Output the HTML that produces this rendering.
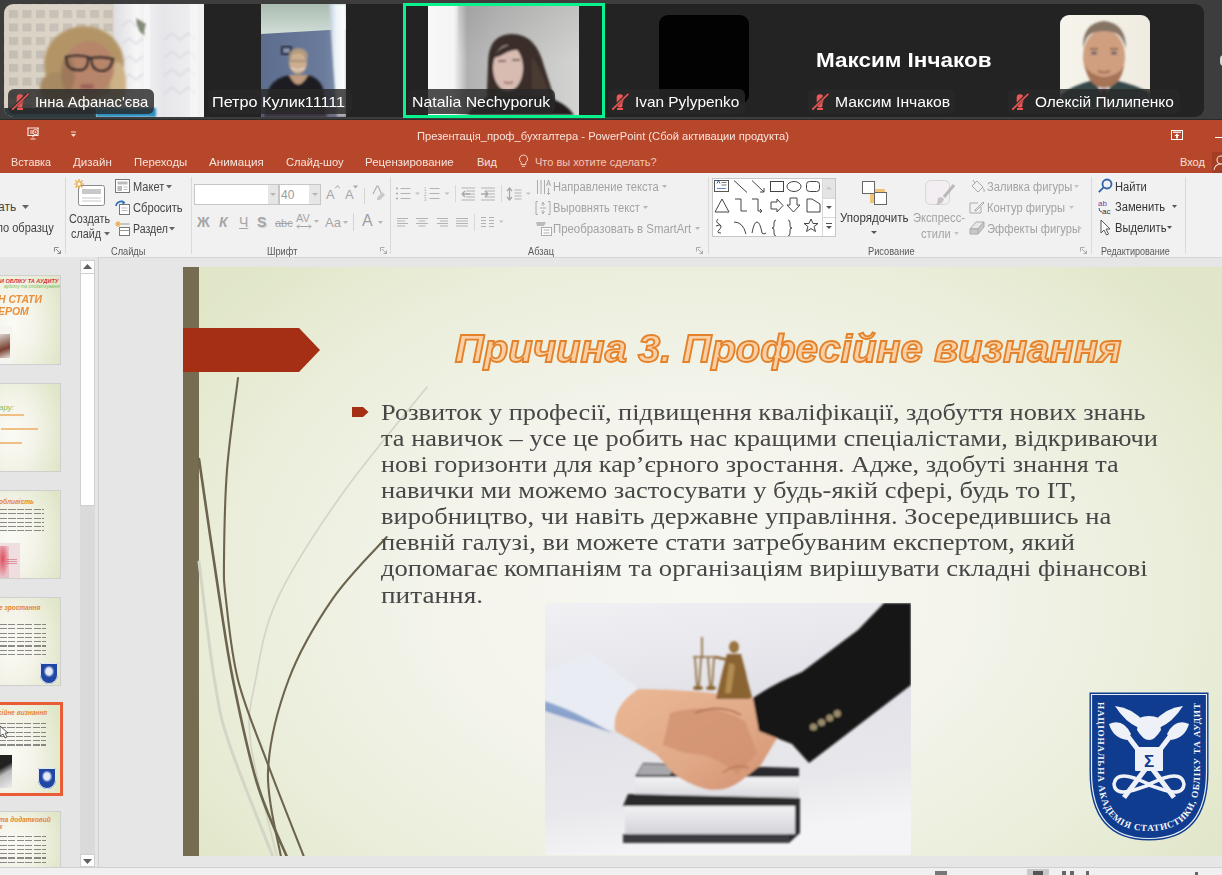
<!DOCTYPE html>
<html><head><meta charset="utf-8">
<style>
*{margin:0;padding:0;box-sizing:border-box}
html,body{width:1222px;height:875px;overflow:hidden;background:#3c3c3c;font-family:"Liberation Sans",sans-serif}
.a{position:absolute}
#zoom{position:absolute;left:0;top:0;width:1222px;height:120px;background:#3d3d3d}
.strip{position:absolute;left:4px;top:4px;width:1200px;height:113px;background:#232323;border-radius:9px;overflow:hidden}
.lbl{position:absolute;height:25px;background:rgba(40,40,40,.82);border-radius:6px;color:#fff;font-size:15px;line-height:25px;white-space:nowrap}
.lbl span{position:absolute;top:0}
.mute{position:absolute;left:4px;top:4px;width:17px;height:17px}
#ppt{position:absolute;left:0;top:120px;width:1222px;height:755px;background:#e6e6e6}
.title{position:absolute;left:0;top:0;width:1222px;height:53px;background:#b7472a}
.tab{position:absolute;top:35px;color:#f6e3dc;font-size:11px;line-height:14px;white-space:nowrap}
.ribbon{position:absolute;left:0;top:53px;width:1222px;height:85px;background:#f2f1f2;border-bottom:1px solid #d6d6d6}
.rt{position:absolute;font-size:12px;color:#444;white-space:nowrap;line-height:14px}
.rg{color:#a5a5a5}
.gl{position:absolute;top:124px;font-size:11px;color:#5a5a5a;white-space:nowrap;line-height:14px}
.thumb{position:absolute;left:-1px;width:62px;border:1px solid #cfcfcf;background:radial-gradient(ellipse 90% 90% at 20% 55%,#fbfbf6 0%,#f3f3e8 45%,#dfe6c6 100%);overflow:hidden}
.body{position:absolute;left:197.5px;top:132px}
.body div{position:absolute;left:0;font-family:"Liberation Serif",serif;font-size:23.5px;line-height:26px;color:#474747;white-space:nowrap;transform-origin:0 0;transform:scaleX(1.118)}
.tl{background:repeating-linear-gradient(#333 0 1px,transparent 1px 4.3px);opacity:.55;-webkit-mask-image:repeating-linear-gradient(90deg,#000 0 7px,transparent 7px 8.5px)}
.logo-s{width:18px;height:21px;background:#1f47a3;border-radius:1px 1px 9px 9px;box-shadow:inset 0 0 0 1px #dfe6f4}
.logo-s::after{content:"";position:absolute;left:3px;top:3px;width:12px;height:12px;background:radial-gradient(ellipse 45% 50% at 50% 45%,rgba(240,244,250,.95) 0 55%,rgba(240,244,250,0) 100%)}
.tt{position:absolute;left:0;font-weight:bold;font-style:italic;white-space:nowrap;line-height:1;transform-origin:0 0}
.sep{position:absolute;top:58px;width:1px;height:77px;background:#dadada}
</style></head><body>
<div id="zoom">
 <div class="a" style="left:0;top:119px;width:1222px;height:1px;background:#2a2a2a"></div>
 <div class="strip">
  <!-- tile1 video -->
  <svg class="a" style="left:0;top:0" width="200" height="113" viewBox="0 0 200 113">
   <defs>
    <filter id="b1" x="-20%" y="-20%" width="140%" height="140%"><feGaussianBlur stdDeviation="1.6"/></filter>
    <filter id="b2"><feGaussianBlur stdDeviation="0.8"/></filter>
    <pattern id="tiles" width="13.5" height="13.5" patternUnits="userSpaceOnUse" x="3" y="4"><rect width="13.5" height="13.5" fill="#d8d0c2"/><rect x="2" y="2" width="9" height="8" fill="#c2bbb0"/></pattern>
    <linearGradient id="cur" x1="0" x2="1"><stop offset="0" stop-color="#dedee2"/><stop offset=".25" stop-color="#f6f6f7"/><stop offset=".55" stop-color="#e6e6ea"/><stop offset="1" stop-color="#f2f2f4"/></linearGradient>
    <radialGradient id="wallLight" cx=".6" cy=".2" r=".8"><stop offset="0" stop-color="#fff" stop-opacity=".12"/><stop offset="1" stop-color="#fff" stop-opacity="0"/></radialGradient>
   </defs>
   <rect width="200" height="113" fill="url(#tiles)"/>
   <rect width="114" height="113" fill="url(#wallLight)"/>
   <rect x="110" y="0" width="90" height="113" fill="url(#cur)"/>
   <g filter="url(#b2)" stroke="#cfcfd4" stroke-width="1.3" fill="none" opacity=".75">
    <path d="M118 22 l7 -6 l7 6 l7 -6 M118 40 l7 -6 l7 6 l7 -6 M118 58 l7 -6 l7 6 l7 -6 M118 76 l7 -6 l7 6 l7 -6 M160 36 l8 -7 l8 7 l8 -7 l8 7 M160 54 l8 -7 l8 7 l8 -7 l8 7 M160 72 l8 -7 l8 7 l8 -7 l8 7 M160 90 l8 -7 l8 7 l8 -7 l8 7"/>
   </g>
   <rect x="140" y="0" width="6" height="113" fill="#fafafa" opacity=".6"/>
   <rect x="186" y="0" width="8" height="113" fill="#f8f8f8" opacity=".6"/>
   <path d="M132 14 q6 4 10 6 q-3 8 -1 12 q-8 -4 -9 -18z" fill="#53603f" opacity=".7" filter="url(#b2)"/>
   <g filter="url(#b1)">
    <ellipse cx="80" cy="60" rx="40" ry="38" fill="#b39466"/>
    <ellipse cx="52" cy="84" rx="16" ry="16" fill="#a88a62"/>
    <ellipse cx="114" cy="80" rx="8" ry="22" fill="#cdb287"/>
    <ellipse cx="85" cy="64" rx="25" ry="27" fill="#b6856a"/>
    <ellipse cx="64" cy="70" rx="7" ry="18" fill="#9a7456" opacity=".8"/>
    <rect x="76" y="80" width="14" height="5" rx="2" fill="#9e5e58"/>
   </g>
   <g fill="none" stroke="#34292a" stroke-width="2" filter="url(#b2)">
    <path d="M62 53 Q73 50 84 53 Q85 64 78 66 Q66 67 63 60z M87 54 Q98 52 109 55 Q107 66 99 67 Q90 67 88 60z M84 54 h3"/>
   </g>
   <rect x="0" y="104" width="92" height="9" fill="#2c3b3e"/>
   <rect x="92" y="104" width="60" height="9" fill="#2a8ec0" filter="url(#b2)"/>
  </svg>
  <!-- tile2 video -->
  <svg class="a" style="left:257px;top:0" width="85" height="113" viewBox="0 0 85 113">
   <defs>
    <linearGradient id="ceil" x1="0" y1="0" x2="0" y2="1"><stop offset="0" stop-color="#a9bcb0"/><stop offset="1" stop-color="#d2ddd8"/></linearGradient>
    <linearGradient id="wall2" x1="0" x2="1"><stop offset="0" stop-color="#5d6d8e"/><stop offset=".75" stop-color="#6b7b9c"/><stop offset="1" stop-color="#8898b2"/></linearGradient>
    <linearGradient id="win2" x1="0" x2="1"><stop offset="0" stop-color="#b8c8da"/><stop offset=".4" stop-color="#eef3f8"/><stop offset="1" stop-color="#ffffff"/></linearGradient>
   </defs>
   <rect width="85" height="113" fill="url(#wall2)"/>
   <path d="M0 0 H85 V25 L0 30 z" fill="url(#ceil)"/>
   <path d="M68 0 H85 V113 H76 L72 60 z" fill="url(#win2)" filter="url(#b2)"/>
   <rect x="20" y="42" width="11" height="9" fill="#2c3346" filter="url(#b2)"/>
   <rect x="22" y="44" width="7" height="5" fill="#8a94a8" filter="url(#b2)"/>
   <g filter="url(#b2)">
    <path d="M3 113 L8 84 Q16 72 30 71 L46 71 Q58 73 62 84 L66 113z" fill="#1c1b20"/>
    <path d="M28 71 Q37 90 47 71z" fill="#c09a7e"/>
    <ellipse cx="37" cy="59" rx="9" ry="11" fill="#cdae8e"/>
    <path d="M27 55 Q28 44 38 44 Q48 45 47 56 Q44 49 37 49 Q30 50 27 55z" fill="#b09a7e"/>
    <rect x="29" y="56" width="16" height="2" fill="#8a7a6a" opacity=".6"/>
    <path d="M30 64 Q37 68 44 64" stroke="#fff" stroke-width="1.2" fill="none" opacity=".7"/>
   </g>
   <rect x="0" y="104" width="85" height="9" fill="#5e4b5c" opacity=".45"/>
  </svg>
  <!-- tile3 green border + video -->
  <svg class="a" style="left:424px;top:2px" width="151" height="109" viewBox="0 0 151 109">
   <defs>
    <linearGradient id="wall3" x1="0" x2="1"><stop offset="0" stop-color="#f8f8f8"/><stop offset=".17" stop-color="#f4f4f4"/><stop offset=".26" stop-color="#b0b0b0"/><stop offset=".45" stop-color="#bcbcbc"/><stop offset="1" stop-color="#d3d3d1"/></linearGradient>
    <linearGradient id="wall3v" x1="0" y1="0" x2="0" y2="1"><stop offset="0" stop-color="#000" stop-opacity=".08"/><stop offset=".5" stop-color="#000" stop-opacity="0"/></linearGradient>
   </defs>
   <rect width="151" height="109" fill="url(#wall3)"/>
   <rect x="30" width="121" height="109" fill="url(#wall3v)"/>
   <g filter="url(#b2)">
    <path d="M58 109 L60 58 Q60 28 84 28 Q108 28 116 60 L132 109z" fill="#3a2f2b"/>
    <path d="M104 50 Q118 70 126 109 L104 109z" fill="#4a3a32"/>
    <ellipse cx="80" cy="62" rx="15" ry="23" fill="#d8bcb2"/>
    <path d="M66 52 Q70 40 86 38 L96 44 Q84 42 72 50z" fill="#3a2f2b"/>
    <path d="M70 55 h8 M84 54 h8" stroke="#5a4440" stroke-width="1.5"/>
    <path d="M76 76 q5 2 9 0" stroke="#a87070" stroke-width="2" fill="none"/>
    <path d="M40 109 Q48 92 66 90 L112 90 Q136 94 146 109z" fill="#201d1e"/>
   </g>
  </svg>
  <!-- tile4 black -->
  <div class="a" style="left:655px;top:11px;width:90px;height:89px;background:#020202;border-radius:9px"></div>
  <!-- tile5 name -->
  <div class="a" style="left:812px;top:43px;color:#fff;font-weight:bold;font-size:21px;line-height:26px;white-space:nowrap;transform-origin:0 0;transform:scaleX(1.07)">Максим Інчаков</div>
  <!-- tile6 photo -->
  <svg class="a" style="left:1056px;top:11px" width="90" height="94" viewBox="0 0 90 94">
   <defs><clipPath id="cp6"><rect width="90" height="94" rx="9"/></clipPath>
    <linearGradient id="bg6" x1="0" x2="1"><stop offset="0" stop-color="#f6f4ec"/><stop offset="1" stop-color="#efebe0"/></linearGradient></defs>
   <g clip-path="url(#cp6)">
    <rect width="90" height="94" fill="url(#bg6)"/>
    <g filter="url(#b2)">
     <path d="M0 94 L0 80 Q14 70 30 66 L58 66 Q76 70 90 78 L90 94z" fill="#34474a"/>
     <path d="M34 66 L44 82 L54 66z" fill="#e6e4e4"/>
     <path d="M41 74 L47 74 L46 94 L42 94z" fill="#5e2f36"/>
     <ellipse cx="44" cy="42" rx="21" ry="28" fill="#cf9f80"/>
     <path d="M23 34 Q22 8 44 6 Q66 8 66 34 Q63 22 56 18 Q44 14 32 18 Q25 22 23 34z" fill="#857363"/>
     <path d="M25 50 Q28 72 44 73 Q61 72 64 50 Q60 60 44 62 Q29 60 25 50z" fill="#a57356"/>
     <path d="M30 34 h8 M50 34 h8" stroke="#7a5a48" stroke-width="1.6"/>
     <ellipse cx="34" cy="38" rx="3" ry="1.6" fill="#5c5c66"/>
     <ellipse cx="54" cy="38" rx="3" ry="1.6" fill="#5c5c66"/>
     <path d="M38 56 q6 3 12 0" stroke="#9a5a4a" stroke-width="1.5" fill="none"/>
    </g>
   </g>
  </svg>
 </div>
 <div class="a" style="left:403px;top:3px;width:202px;height:115px;border:3px solid #08f28e"></div>
 <!-- labels -->
 <div class="lbl" style="left:8px;top:89px;width:146px"><svg class="mute" viewBox="0 0 17 17"><path d="M4.7 4.5 a3.3 3.3 0 0 1 6.6 0 v5 h-6.6z M5.6 9 h4.8 v4.2 q0 1.2 -1.5 1.2 h-1.8 q-1.5 0 -1.5 -1.2z M5 15 h6 v2 h-6z" fill="#ee5656"/><path d="M-.5 17 L15.5 1" stroke="#2e2e2e" stroke-width="3.2"/><path d="M.3 16.6 L16 1.2" stroke="#ee5656" stroke-width="1.6" stroke-linecap="round"/></svg><span style="left:27px;transform-origin:0 0;transform:scaleX(.985)">Інна Афанас'єва</span></div>
 <div class="lbl" style="left:208px;top:89px;width:144px"><span style="left:4px;transform-origin:0 0;transform:scaleX(1.08)">Петро Кулик11111</span></div>
 <div class="lbl" style="left:408px;top:89px;width:147px"><span style="left:4px;transform-origin:0 0;transform:scaleX(1.055)">Natalia Nechyporuk</span></div>
 <div class="lbl" style="left:608px;top:89px;width:137px"><svg class="mute" viewBox="0 0 17 17"><path d="M4.7 4.5 a3.3 3.3 0 0 1 6.6 0 v5 h-6.6z M5.6 9 h4.8 v4.2 q0 1.2 -1.5 1.2 h-1.8 q-1.5 0 -1.5 -1.2z M5 15 h6 v2 h-6z" fill="#ee5656"/><path d="M-.5 17 L15.5 1" stroke="#2e2e2e" stroke-width="3.2"/><path d="M.3 16.6 L16 1.2" stroke="#ee5656" stroke-width="1.6" stroke-linecap="round"/></svg><span style="left:27px;transform-origin:0 0;transform:scaleX(1.025)">Ivan Pylypenko</span></div>
 <div class="lbl" style="left:808px;top:89px;width:147px"><svg class="mute" viewBox="0 0 17 17"><path d="M4.7 4.5 a3.3 3.3 0 0 1 6.6 0 v5 h-6.6z M5.6 9 h4.8 v4.2 q0 1.2 -1.5 1.2 h-1.8 q-1.5 0 -1.5 -1.2z M5 15 h6 v2 h-6z" fill="#ee5656"/><path d="M-.5 17 L15.5 1" stroke="#2e2e2e" stroke-width="3.2"/><path d="M.3 16.6 L16 1.2" stroke="#ee5656" stroke-width="1.6" stroke-linecap="round"/></svg><span style="left:27px;transform-origin:0 0;transform:scaleX(1.05)">Максим Інчаков</span></div>
 <div class="lbl" style="left:1008px;top:89px;width:172px"><svg class="mute" viewBox="0 0 17 17"><path d="M4.7 4.5 a3.3 3.3 0 0 1 6.6 0 v5 h-6.6z M5.6 9 h4.8 v4.2 q0 1.2 -1.5 1.2 h-1.8 q-1.5 0 -1.5 -1.2z M5 15 h6 v2 h-6z" fill="#ee5656"/><path d="M-.5 17 L15.5 1" stroke="#2e2e2e" stroke-width="3.2"/><path d="M.3 16.6 L16 1.2" stroke="#ee5656" stroke-width="1.6" stroke-linecap="round"/></svg><span style="left:27px;transform-origin:0 0;transform:scaleX(1.03)">Олексій Пилипенко</span></div>
 <div class="a" style="left:1220px;top:55px;width:8px;height:11px;border-radius:5px;background:#d8d8d8"></div>
</div>

<div id="ppt">
 <div class="title">
  <svg class="a" style="left:26px;top:7px" width="14" height="13" viewBox="0 0 14 13"><path d="M1 1h12 M2 1.5v7h10v-7 M4 4h3 M4 6h3 M7 8.5v2 M4.5 12h5" stroke="#fbe9e3" stroke-width="1.1" fill="none"/><circle cx="9.5" cy="5.2" r="2.6" fill="#b7472a" stroke="#fbe9e3" stroke-width="1"/><path d="M8.8 3.8v2.8l2-1.4z" fill="#fbe9e3"/></svg>
  <svg class="a" style="left:70px;top:11px" width="7" height="7" viewBox="0 0 7 7"><path d="M1 1h5" stroke="#f6dcd3" stroke-width="1"/><path d="M1 3l2.5 3l2.5-3z" fill="#f6dcd3"/></svg>
  <div class="a" style="left:417px;top:9px;font-size:11px;line-height:14px;color:#f8e4dd;white-space:nowrap;transform-origin:0 0;transform:scaleX(1.015)">Презентація_проф_бухгалтера - PowerPoint (Сбой активации продукта)</div>
  <svg class="a" style="left:1171px;top:10px" width="12" height="10" viewBox="0 0 12 10"><rect x=".5" y=".5" width="11" height="9" fill="none" stroke="#fff" stroke-width="1"/><path d="M2 2.2h8" stroke="#fff" stroke-width="1.2"/><path d="M6 3.5l-2.6 2.6h1.7v2.4h1.8v-2.4h1.7z" fill="#fff"/></svg>
  <div class="a" style="left:1215px;top:17px;width:8px;height:1px;background:#fff"></div>
  <div class="tab" style="left:11px;transform-origin:0 0;transform:scaleX(.98)">Вставка</div>
  <div class="tab" style="left:73px;transform-origin:0 0;transform:scaleX(1.05)">Дизайн</div>
  <div class="tab" style="left:134px;transform-origin:0 0;transform:scaleX(1.03)">Переходы</div>
  <div class="tab" style="left:209px;transform-origin:0 0;transform:scaleX(1.06)">Анимация</div>
  <div class="tab" style="left:286px;transform-origin:0 0;transform:scaleX(1.01)">Слайд-шоу</div>
  <div class="tab" style="left:365px;transform-origin:0 0;transform:scaleX(1.045)">Рецензирование</div>
  <div class="tab" style="left:477px">Вид</div>
  <svg class="a" style="left:518px;top:34px" width="11" height="14" viewBox="0 0 11 14"><path d="M5.5 1a4 4 0 0 0 -2.3 7.3v2.2h4.6v-2.2a4 4 0 0 0 -2.3 -7.3z M3.8 12.3h3.4" fill="none" stroke="#f3cfc3" stroke-width="1"/></svg>
  <div class="tab" style="left:535px;color:#f0c6b9">Что вы хотите сделать?</div>
  <div class="tab" style="left:1180px">Вход</div>
  <div class="a" style="left:1212px;top:32px;width:10px;height:21px;background:#a33d23"></div>
  <svg class="a" style="left:1213px;top:35px" width="9" height="16" viewBox="0 0 9 16"><circle cx="8" cy="5" r="4" fill="none" stroke="#f6e0d8" stroke-width="1.1"/><path d="M1 15q1-6 7-6" fill="none" stroke="#f6e0d8" stroke-width="1.1"/></svg>
 </div>
 <div class="ribbon">
  <!-- clipboard partial -->
  <div class="rt" style="left:-8px;top:6px;color:#555">•</div>
  <div class="rt" style="left:-2px;top:27px">ать</div>
  <svg class="a" style="left:22px;top:32px" width="7" height="4"><path d="M0 0h7l-3.5 4z" fill="#666"/></svg>
  <div class="rt" style="left:-3px;top:48px;transform-origin:0 0;transform:scaleX(.92)">по образцу</div>
  <svg class="a" style="left:54px;top:74px" width="7" height="7"><path d="M.5 .5h4 M.5 .5v4 M2 2l4.5 4.5 M3.5 6.5h3v-3" stroke="#888" fill="none" stroke-width="1"/></svg>
  <div class="sep" style="left:65px;top:4px"></div>
  <!-- slides -->
  <svg class="a" style="left:73px;top:5px" width="33" height="29" viewBox="0 0 33 29"><rect x="5.5" y="7.5" width="26" height="20" rx="2" fill="#fff" stroke="#8a8a8a"/><rect x="9" y="11" width="19" height="5" fill="#c8c8c8"/><path d="M9 20h19 M9 23h19" stroke="#c8c8c8"/><g stroke="#e8a33b" stroke-width="1.2"><path d="M6 1v10 M1 6h10 M2.5 2.5l7 7 M9.5 2.5l-7 7"/></g><circle cx="6" cy="6" r="2.2" fill="#fff" stroke="#e8a33b"/></svg>
  <div class="rt" style="left:69px;top:39px;transform-origin:0 0;transform:scaleX(.9)">Создать</div>
  <div class="rt" style="left:71px;top:53.5px;transform-origin:0 0;transform:scaleX(.9)">слайд</div>
  <svg class="a" style="left:104px;top:58.5px" width="6" height="4"><path d="M0 0h6l-3 3.5z" fill="#666"/></svg>
  <svg class="a" style="left:115px;top:6px" width="15" height="14" viewBox="0 0 15 14"><rect x=".5" y=".5" width="14" height="13" fill="#fff" stroke="#777"/><rect x="2.5" y="2.5" width="10" height="3" fill="#bbb"/><rect x="2.5" y="7" width="4.5" height="5" fill="#bbb"/><path d="M8.5 8h4 M8.5 10.5h4" stroke="#bbb"/></svg>
  <div class="rt" style="left:133px;top:7px;transform-origin:0 0;transform:scaleX(.92)">Макет</div>
  <svg class="a" style="left:166px;top:12px" width="6" height="4"><path d="M0 0h6l-3 3.5z" fill="#666"/></svg>
  <svg class="a" style="left:115px;top:27px" width="15" height="15" viewBox="0 0 15 15"><rect x="4.5" y="4.5" width="10" height="10" fill="#fff" stroke="#777"/><path d="M6.5 8h6 M6.5 10.5h6" stroke="#bbb"/><path d="M1 6a5 5 0 0 1 8-3.5" stroke="#2f6fb8" stroke-width="1.6" fill="none"/><path d="M7.5 0.5l3 2.2l-3 2z" fill="#2f6fb8"/></svg>
  <div class="rt" style="left:133px;top:28px;transform-origin:0 0;transform:scaleX(.93)">Сбросить</div>
  <svg class="a" style="left:115px;top:48px" width="15" height="15" viewBox="0 0 15 15"><rect x="4.5" y="6.5" width="10" height="8" fill="#fff" stroke="#777"/><path d="M4.5 9.5h10 M6 3h8.5" stroke="#999"/><g stroke="#e8a33b"><path d="M3 0v6 M0 3h6 M1 1l4 4 M5 1l-4 4"/></g></svg>
  <div class="rt" style="left:133px;top:49px;transform-origin:0 0;transform:scaleX(.88)">Раздел</div>
  <svg class="a" style="left:169px;top:54px" width="6" height="4"><path d="M0 0h6l-3 3.5z" fill="#666"/></svg>
  <div class="gl" style="left:111px;top:70.5px;font-size:10.5px;transform-origin:0 0;transform:scaleX(.88)">Слайды</div>
  <div class="sep" style="left:191px;top:4px"></div>
  <!-- font -->
  <div class="a" style="left:194px;top:11px;width:85px;height:21px;background:#fff;border:1px solid #c6c6c6"></div>
  <div class="a" style="left:268px;top:12px;width:10px;height:19px;background:#e6e6e6"></div>
  <svg class="a" style="left:270px;top:20px" width="6" height="4"><path d="M0 0h6l-3 3z" fill="#b5b5b5"/></svg>
  <div class="a" style="left:279px;top:11px;width:42px;height:21px;background:#fff;border:1px solid #c6c6c6"></div>
  <div class="a" style="left:309px;top:12px;width:11px;height:19px;background:#e6e6e6"></div>
  <svg class="a" style="left:312px;top:20px" width="6" height="4"><path d="M0 0h6l-3 3z" fill="#b5b5b5"/></svg>
  <div class="rt" style="left:281px;top:15px;color:#9c9c9c">40</div>
  <div class="rt" style="left:326px;top:15px;color:#a5a5a5;font-size:13px">A</div>
  <svg class="a" style="left:335px;top:12px" width="5" height="4"><path d="M0 3.5l2.5-3l2.5 3" fill="none" stroke="#a5a5a5"/></svg>
  <div class="rt" style="left:345px;top:15px;color:#a5a5a5;font-size:13px">A</div>
  <svg class="a" style="left:353px;top:12px" width="5" height="4"><path d="M0 .5h5l-2.5 3z" fill="#a5a5a5"/></svg>
  <div class="a" style="left:364px;top:15px;width:1px;height:16px;background:#d4d4d4"></div>
  <svg class="a" style="left:371px;top:12px" width="15" height="16" viewBox="0 0 15 16"><path d="M2 9l4-8h1l3 7" fill="none" stroke="#b0b0b0" stroke-width="1.2"/><path d="M6 13l5-6l3 3l-5 5h-3z" fill="#c9c9c9"/></svg>
  <div class="rt" style="left:197px;top:41px;color:#a5a5a5;font-weight:bold;font-size:14px;line-height:16px">Ж</div>
  <div class="rt" style="left:219px;top:41px;color:#a5a5a5;font-weight:bold;font-style:italic;font-size:14px;line-height:16px">К</div>
  <div class="rt" style="left:239px;top:41px;color:#a5a5a5;font-size:14px;line-height:16px;text-decoration:underline">Ч</div>
  <div class="rt" style="left:257px;top:41px;color:#a5a5a5;font-weight:bold;font-size:14px;line-height:16px;text-shadow:1px 1px 1px #ccc">S</div>
  <div class="rt" style="left:275px;top:43px;color:#a5a5a5;font-size:11px;text-decoration:line-through">abc</div>
  <div class="rt" style="left:296px;top:38px;color:#a5a5a5;font-size:11px">AV</div>
  <svg class="a" style="left:296px;top:51px" width="16" height="5"><path d="M1 2.5h14 M1 2.5l2-2 M1 2.5l2 2 M15 2.5l-2-2 M15 2.5l-2 2" stroke="#a5a5a5" fill="none"/></svg>
  <svg class="a" style="left:314px;top:47px" width="5" height="3"><path d="M0 0h5l-2.5 3z" fill="#b5b5b5"/></svg>
  <div class="rt" style="left:325px;top:43px;color:#a5a5a5;font-size:13px">Aa</div>
  <svg class="a" style="left:343px;top:48px" width="5" height="3"><path d="M0 0h5l-2.5 3z" fill="#b5b5b5"/></svg>
  <div class="a" style="left:353px;top:40px;width:1px;height:18px;background:#d4d4d4"></div>
  <div class="rt" style="left:362px;top:39px;color:#9e9e9e;font-size:16px;line-height:18px">A</div>
  <svg class="a" style="left:378px;top:48px" width="5" height="3"><path d="M0 0h5l-2.5 3z" fill="#b5b5b5"/></svg>
  <div class="gl" style="left:267px;top:70.5px;font-size:10.5px;transform-origin:0 0;transform:scaleX(.88)">Шрифт</div>
  <svg class="a" style="left:380px;top:74px" width="7" height="7"><path d="M.5 .5h4 M.5 .5v4 M2 2l4.5 4.5 M3.5 6.5h3v-3" stroke="#aaa" fill="none" stroke-width="1"/></svg>
  <div class="sep" style="left:390px;top:4px"></div>
  <!-- paragraph -->
  <svg class="a" style="left:395px;top:7px" width="140" height="56" viewBox="0 0 140 56" fill="none" stroke="#b3b3b3" stroke-width="1">
   <circle cx="2" cy="8.5" r="1.1" fill="#b0b0b0" stroke="none"/><circle cx="2" cy="13.5" r="1.1" fill="#b0b0b0" stroke="none"/><circle cx="2" cy="18.5" r="1.1" fill="#b0b0b0" stroke="none"/>
   <path d="M5.5 8.5h10 M5.5 13.5h10 M5.5 18.5h10"/>
   <path d="M20 12.5h5l-2.5 2.5z" fill="#c0c0c0" stroke="none"/>
   <text x="29" y="11" font-size="4.5" fill="#b0b0b0" stroke="none" font-family="Liberation Sans">1</text><text x="29" y="16" font-size="4.5" fill="#b0b0b0" stroke="none" font-family="Liberation Sans">2</text><text x="29" y="21" font-size="4.5" fill="#b0b0b0" stroke="none" font-family="Liberation Sans">3</text>
   <path d="M34.5 8.5h10 M34.5 13.5h10 M34.5 18.5h10"/>
   <path d="M49.5 12.5h5l-2.5 2.5z" fill="#c0c0c0" stroke="none"/>
   <path d="M60.5 5v17" stroke="#d8d8d8"/>
   <path d="M66.5 8h13.5 M71 11h9 M71 14h9 M71 17h9 M66.5 20h13.5"/>
   <path d="M75 14h-8 M67 14l3-3 M67 14l3 3" stroke="#a8a8a8" stroke-width="1.4"/>
   <path d="M86 8h14 M90 11h10 M90 14h10 M90 17h10 M86 20h14"/>
   <path d="M86 14h7 M93 14l-3-3 M93 14l-3 3" stroke="#a8a8a8" stroke-width="1.4"/>
   <path d="M106.5 5v17" stroke="#d8d8d8"/>
   <path d="M114.5 9v10 M112 11l2.5-3l2.5 3 M112 17l2.5 3l2.5-3" stroke="#a8a8a8" stroke-width="1.3"/>
   <path d="M119.5 10h7 M119.5 13h7 M119.5 16h7 M119.5 19h7"/>
   <path d="M131 12.5h4.5l-2.25 2.5z" fill="#c0c0c0" stroke="none"/>
   <path d="M2 38.5h11 M2 41h8 M2 43.5h11 M2 46h8"/>
   <path d="M21 38.5h12 M23.5 41h7 M21 43.5h12 M23.5 46h7"/>
   <path d="M42 38.5h11 M45 41h8 M42 43.5h11 M45 46h8"/>
   <path d="M61 38.5h12 M61 41h12 M61 43.5h12 M61 46h12"/>
   <path d="M79.5 34v17" stroke="#d8d8d8"/>
   <path d="M86 37.5h5 M86 40.5h5 M86 43.5h5 M86 46.5h5 M94 37.5h5 M94 40.5h5 M94 43.5h5 M94 46.5h5"/>
   <path d="M104 40.5h4.5l-2.25 2.5z" fill="#c0c0c0" stroke="none"/>
  </svg>
  <svg class="a" style="left:536px;top:6px" width="16" height="16" viewBox="0 0 16 16" fill="none" stroke="#ababab"><path d="M1.5 1v14 M5 1v14 M8.5 1v14 M11 14l1.5 1.5l1.5-1.5 M12.5 15v-6"/><path d="M10.5 7l2-6l2 6 M11.2 5h2.6"/></svg>
  <div class="rt" style="left:553px;top:7px;color:#a3a3a3;transform-origin:0 0;transform:scaleX(.93)">Направление текста</div>
  <svg class="a" style="left:662px;top:12px" width="5" height="3"><path d="M0 0h5l-2.5 3z" fill="#b5b5b5"/></svg>
  <svg class="a" style="left:535px;top:27px" width="16" height="16" viewBox="0 0 16 16" fill="none" stroke="#ababab"><path d="M3 1.5h-2v13h2 M13 1.5h2v13h-2 M5 8h6 M8 2v4 M6.5 4.5l1.5-2l1.5 2 M8 14v-4 M6.5 11.5l1.5 2l1.5-2"/></svg>
  <div class="rt" style="left:553px;top:28px;color:#a3a3a3;transform-origin:0 0;transform:scaleX(.93)">Выровнять текст</div>
  <svg class="a" style="left:643px;top:33px" width="5" height="3"><path d="M0 0h5l-2.5 3z" fill="#b5b5b5"/></svg>
  <svg class="a" style="left:535px;top:48px" width="18" height="16" viewBox="0 0 18 16" fill="none" stroke="#ababab"><path d="M1 1h10l-2 4h-7z" fill="#bbb" stroke="none"/><rect x="6.5" y="6.5" width="10" height="8" fill="#fff"/><path d="M8.5 9h6 M8.5 12h6"/></svg>
  <div class="rt" style="left:553px;top:49px;color:#a3a3a3;transform-origin:0 0;transform:scaleX(.95)">Преобразовать в SmartArt</div>
  <svg class="a" style="left:695px;top:54px" width="5" height="3"><path d="M0 0h5l-2.5 3z" fill="#b5b5b5"/></svg>
  <div class="gl" style="left:528px;top:70.5px;font-size:10.5px;transform-origin:0 0;transform:scaleX(.88)">Абзац</div>
  <svg class="a" style="left:696px;top:74px" width="7" height="7"><path d="M.5 .5h4 M.5 .5v4 M2 2l4.5 4.5 M3.5 6.5h3v-3" stroke="#aaa" fill="none" stroke-width="1"/></svg>
  <div class="sep" style="left:708px;top:4px"></div>
  <!-- drawing -->
  <div class="a" style="left:712px;top:5px;width:124px;height:59px;background:#fff;border:1px solid #c6c6c6"></div>
  <div class="a" style="left:823px;top:6px;width:12px;height:19px;background:#e4e4e4"></div>
  <div class="a" style="left:822px;top:6px;width:1px;height:57px;background:#d8d8d8"></div>
  <div class="a" style="left:823px;top:25px;width:12px;height:1px;background:#d8d8d8"></div>
  <div class="a" style="left:823px;top:44px;width:12px;height:1px;background:#d8d8d8"></div>
  <svg class="a" style="left:826px;top:13px" width="6" height="4"><path d="M0 3.5l3-3l3 3z" fill="#c9c9c9"/></svg>
  <svg class="a" style="left:826px;top:33px" width="6" height="4"><path d="M0 0h6l-3 3z" fill="#555"/></svg>
  <svg class="a" style="left:826px;top:50px" width="6" height="7"><path d="M0 .5h6" stroke="#555"/><path d="M0 3h6l-3 3z" fill="#555"/></svg>
  <svg class="a" style="left:713px;top:6px" width="110" height="57" viewBox="0 0 110 57" fill="none" stroke="#444" stroke-width="1">
   <rect x="1.5" y="1.5" width="14" height="11" stroke="#555"/><path d="M4 9.5h9" stroke="#5b8fd1"/><path d="M4 4.5l1.5-3l1.5 3" stroke="#2f6fb8"/><path d="M8.5 3.5h5 M8.5 6h5" stroke="#777"/>
   <path d="M21 1.5l13 12"/>
   <path d="M39 1.5l12 11.5 M51 9v4h-4"/>
   <rect x="57.5" y="2.5" width="13" height="10"/>
   <ellipse cx="81" cy="7.5" rx="7" ry="5"/>
   <rect x="93.5" y="2.5" width="13" height="10" rx="3"/>
   <path d="M2 33l7-13l7 13z"/>
   <path d="M22 20h6v12h6"/>
   <path d="M39 20h6v12h4 M47 30l2 2l-2 2"/>
   <path d="M58 23h6v-3l6 6.5l-6 6.5v-3h-6z"/>
   <path d="M77 19h7v7h3l-6.5 7l-6.5-7h3z"/>
   <path d="M94 20h5l8 5v8h-13z"/>
   <path d="M5 40q-3 3 1 5q4 2 0 6q-3 3 2 3 M3 47q4-2 5 0"/>
   <path d="M21 43q9 0 12 12"/>
   <path d="M39 54q2-11 5-11q3 0 5 11q2 2 4 0"/>
   <path d="M63 41q-2 0-2 3v3q0 2-2 2q2 0 2 2v3q0 3 2 3"/>
   <path d="M75 41q2 0 2 3v3q0 2 2 2q-2 0-2 2v3q0 3-2 3"/>
   <path d="M98 40l2 4.5h5l-4 3l1.5 5l-4.5-3l-4.5 3l1.5-5l-4-3h5z"/>
  </svg>
  <svg class="a" style="left:860px;top:6px" width="28" height="28" viewBox="0 0 28 28"><rect x="10" y="10" width="15" height="14" fill="#f0c476"/><rect x="2.5" y="2.5" width="12" height="12" fill="#fff" stroke="#666"/><rect x="14.5" y="13.5" width="12" height="12" fill="#fff" stroke="#666"/></svg>
  <div class="rt" style="left:840px;top:38px;color:#3a3a3a;transform-origin:0 0;transform:scaleX(.96)">Упорядочить</div>
  <svg class="a" style="left:871px;top:58px" width="6" height="3"><path d="M0 0h6l-3 3z" fill="#555"/></svg>
  <svg class="a" style="left:924px;top:6px" width="32" height="30" viewBox="0 0 32 30"><rect x="1.5" y="1.5" width="24" height="24" rx="5" fill="#f3eef1" stroke="#d6d6d6"/><path d="M30 6l-10 12" stroke="#b8b8b8" stroke-width="3"/><path d="M14 19q4-2 6 1q-1 5-8 6q2-3 2-7z" fill="#c4c4c4"/></svg>
  <div class="rt" style="left:913px;top:38px;color:#a3a3a3;transform-origin:0 0;transform:scaleX(.93)">Экспресс-</div>
  <div class="rt" style="left:921px;top:54px;color:#a3a3a3;transform-origin:0 0;transform:scaleX(.93)">стили</div>
  <svg class="a" style="left:954px;top:59px" width="5" height="3"><path d="M0 0h5l-2.5 3z" fill="#c5c5c5"/></svg>
  <svg class="a" style="left:970px;top:6px" width="16" height="14" viewBox="0 0 16 14" fill="none" stroke="#aaa"><path d="M2 7l5-5l6 6l-5 5z M5 4l-2-3 M13 9q2 2 1 4"/></svg>
  <div class="rt" style="left:987px;top:7px;color:#a3a3a3;transform-origin:0 0;transform:scaleX(.93)">Заливка фигуры</div>
  <svg class="a" style="left:1074px;top:12px" width="5" height="3"><path d="M0 0h5l-2.5 3z" fill="#c5c5c5"/></svg>
  <svg class="a" style="left:969px;top:27px" width="16" height="15" viewBox="0 0 16 15" fill="none" stroke="#aaa"><path d="M1 3h8 M1 3v10h11v-6 M6 10l8-8l1 1l-8 8h-1z"/></svg>
  <div class="rt" style="left:987px;top:28px;color:#a3a3a3;transform-origin:0 0;transform:scaleX(.93)">Контур фигуры</div>
  <svg class="a" style="left:1069px;top:33px" width="5" height="3"><path d="M0 0h5l-2.5 3z" fill="#c5c5c5"/></svg>
  <svg class="a" style="left:969px;top:47px" width="17" height="15" viewBox="0 0 17 15"><path d="M1 9l6-7h8l-6 7z" fill="#e8e8e8" stroke="#aaa"/><path d="M1 9h8v5h-8z M9 9l6-7v5l-6 7" fill="#c9c9c9" stroke="#aaa"/></svg>
  <div class="rt" style="left:987px;top:49px;color:#a3a3a3;transform-origin:0 0;transform:scaleX(.93)">Эффекты фигуры</div>
  <svg class="a" style="left:1077px;top:54px" width="5" height="3"><path d="M0 0h5l-2.5 3z" fill="#c5c5c5"/></svg>
  <div class="gl" style="left:868px;top:70.5px;font-size:10.5px;transform-origin:0 0;transform:scaleX(.88)">Рисование</div>
  <svg class="a" style="left:1080px;top:74px" width="7" height="7"><path d="M.5 .5h4 M.5 .5v4 M2 2l4.5 4.5 M3.5 6.5h3v-3" stroke="#aaa" fill="none" stroke-width="1"/></svg>
  <div class="sep" style="left:1091px;top:4px"></div>
  <!-- editing -->
  <svg class="a" style="left:1097px;top:5px" width="16" height="16" viewBox="0 0 16 16" fill="none" stroke="#2e62a6" stroke-width="1.8"><circle cx="10" cy="6" r="4.5"/><path d="M6.8 9.2l-5 5"/></svg>
  <div class="rt" style="left:1115px;top:7px;color:#333;transform-origin:0 0;transform:scaleX(.93)">Найти</div>
  <svg class="a" style="left:1097px;top:26px" width="16" height="17" viewBox="0 0 16 17"><text x="1" y="7" font-size="8" fill="#7a3ea0" font-family="Liberation Sans">ab</text><text x="5" y="15" font-size="8" fill="#333" font-family="Liberation Sans">ac</text><path d="M2 9q0 4 3 4" stroke="#2e62a6" fill="none"/></svg>
  <div class="rt" style="left:1115px;top:27px;color:#333;transform-origin:0 0;transform:scaleX(.93)">Заменить</div>
  <svg class="a" style="left:1172px;top:32px" width="5" height="3"><path d="M0 0h5l-2.5 3z" fill="#555"/></svg>
  <svg class="a" style="left:1100px;top:46px" width="12" height="17" viewBox="0 0 12 17"><path d="M1 1v13l3-3l2.5 5l2-1l-2.5-5h4z" fill="#fff" stroke="#555"/></svg>
  <div class="rt" style="left:1115px;top:47.5px;color:#333;transform-origin:0 0;transform:scaleX(.93)">Выделить</div>
  <svg class="a" style="left:1167px;top:52.5px" width="5" height="3"><path d="M0 0h5l-2.5 3z" fill="#555"/></svg>
  <div class="gl" style="left:1101px;top:70.5px;font-size:10.5px;transform-origin:0 0;transform:scaleX(.86)">Редактирование</div>
  <div class="sep" style="left:1185px;top:4px"></div>
 </div>
 <!-- left panel -->
 <div class="a" style="left:0;top:137px;width:99px;height:611px;background:#e5e5e5"></div>
 <div class="a" style="left:98px;top:137px;width:1px;height:611px;background:#cfcfcf"></div>
 <div class="a" style="left:80px;top:140px;width:15px;height:607px;background:#dadada"></div>
 <div class="a" style="left:80px;top:140px;width:15px;height:14px;background:#fff;border:1px solid #d0d0d0"></div>
 <svg class="a" style="left:83px;top:144px" width="9" height="5"><path d="M0 5l4.5-5l4.5 5z" fill="#606060"/></svg>
 <div class="a" style="left:80px;top:154px;width:15px;height:232px;background:#fff;border:1px solid #d0d0d0;border-top:none"></div>
 <div class="a" style="left:80px;top:734px;width:15px;height:13px;background:#fff;border:1px solid #d0d0d0"></div>
 <svg class="a" style="left:83px;top:739px" width="9" height="5"><path d="M0 0h9l-4.5 5z" fill="#606060"/></svg>
 <!-- thumbnails -->
 <div class="thumb" style="top:155px;height:90px">
  <div class="tt" style="top:3px;font-size:5.5px;color:#d8303a">И ОБЛІКУ ТА АУДИТУ</div>
  <div class="tt" style="left:4px;top:9px;font-size:4.5px;color:#7cc060;font-weight:normal;font-style:italic">аудиту та оподаткування</div>
  <div class="tt" style="left:-2px;top:18px;font-size:11px;color:#ea8f3a;transform:scaleX(.95)">Н СТАТИ</div>
  <div class="tt" style="left:-2px;top:30px;font-size:11px;color:#ea8f3a;transform:scaleX(.95)">ЕРОМ</div>
  <div class="a" style="left:0;top:50px;width:12px;height:38px;background:#f6f4f0"></div>
  <div class="a" style="left:0;top:58px;width:10px;height:24px;background:linear-gradient(160deg,#d8d0cc,#7a4030 60%,#e8e0d8)"></div>
 </div>
 <div class="thumb" style="top:263px;height:89px">
  <div class="tt" style="left:-1px;top:20px;font-size:8px;color:#86bb50;font-weight:normal">ару:</div>
  <div class="a" style="left:0;top:30px;width:24px;height:1.5px;background:#eeb066;opacity:.8"></div>
  <div class="a" style="left:1px;top:44px;width:37px;height:1.5px;background:#eeb066;opacity:.8"></div>
  <div class="a" style="left:0;top:58px;width:22px;height:1.5px;background:#eeb066;opacity:.8"></div>
 </div>
 <div class="thumb" style="top:370px;height:89px">
  <div class="tt" style="left:-1px;top:8px;font-size:6.5px;color:#e5842f">обливість</div>
  <div class="a tl" style="left:0;top:18px;width:44px;height:22px"></div>
  <div class="a" style="left:0;top:52px;width:20px;height:35px;background:#f0dde0"></div>
  <div class="a" style="left:0;top:55px;width:9px;height:32px;background:radial-gradient(ellipse at 30% 40%,#e04a5a,#e8c0c8 70%)"></div>
  <div class="a" style="left:6px;top:68px;width:11px;height:6px;background:repeating-linear-gradient(#d06070 0 1px,transparent 1px 2px);opacity:.6"></div>
 </div>
 <div class="thumb" style="top:477px;height:89px">
  <div class="tt" style="left:-1px;top:7px;font-size:6.5px;color:#e5842f">е зростання</div>
  <div class="a tl" style="left:0;top:26px;width:46px;height:34px"></div>
  <div class="a logo-s" style="left:40px;top:65px"></div>
 </div>
 <div class="a" style="left:-3px;top:582px;width:66px;height:94px;border:3px solid #ea5c36"></div>
 <div class="thumb" style="top:585px;height:88px;width:60px;border:none">
  <div class="tt" style="left:-1px;top:5px;font-size:6.5px;color:#e5842f">сійне визнання</div>
  <div class="a tl" style="left:0;top:18px;width:47px;height:26px"></div>
  <div class="a" style="left:0;top:50px;width:13px;height:33px;background:linear-gradient(150deg,#222 35%,#bbb 55%,#eee)"></div>
  <div class="a logo-s" style="left:39px;top:63px"></div>
  <svg class="a" style="left:0;top:20px" width="10" height="14"><path d="M1 1v10l3-2l2 4l2-1l-2-4h3z" fill="#fff" stroke="#333" stroke-width=".8"/></svg>
 </div>
 <div class="thumb" style="top:691px;height:60px">
  <div class="tt" style="left:-1px;top:5px;font-size:6.5px;color:#e5842f">та додатковий</div>
  <div class="tt" style="left:-1px;top:12px;font-size:6.5px;color:#e5842f">к</div>
  <div class="a tl" style="left:0;top:24px;width:46px;height:28px"></div>
 </div>
 <!-- status bar -->
 <div class="a" style="left:0;top:747px;width:1222px;height:1px;background:#cfcfcf"></div>
 <div class="a" style="left:0;top:748px;width:1222px;height:7px;background:#f0f0f0"></div>
 <div class="a" style="left:935px;top:751px;width:12px;height:4px;background:#777"></div>
 <div class="a" style="left:1027px;top:749px;width:22px;height:6px;background:#c8c8c8"></div>
 <div class="a" style="left:1033px;top:751px;width:10px;height:4px;background:#555"></div>
 <div class="a" style="left:1062px;top:751px;width:4px;height:4px;background:#666"></div>
 <div class="a" style="left:1070px;top:751px;width:4px;height:4px;background:#666"></div>
 <div class="a" style="left:1086px;top:751px;width:3px;height:4px;background:#666"></div>
 <div class="a" style="left:1195px;top:752px;width:3px;height:3px;background:#666"></div>
 <!-- slide -->
 <div id="slide" class="a" style="left:183px;top:147px;width:1039px;height:589px;overflow:hidden;background:radial-gradient(ellipse 62% 78% at 50% 55%,#f8f8f3 0%,#f4f4ec 40%,#e9edd8 78%,#e0e6c7 100%)">
  <div class="a" style="left:0;top:0;width:16px;height:589px;background:#756c51"></div>
  <svg class="a" style="left:0;top:0" width="1039" height="589" viewBox="0 0 1039 589">
   <path d="M0 61H116L137 83L116 105H0z" fill="#a52f14"/>
   <g fill="none" stroke-linecap="round">
    <path d="M244.0 120.0 C229.6 138.2 182.6 193.7 157.7 229.0 C132.8 264.3 108.8 300.9 94.6 331.6 C80.4 362.3 77.1 389.1 72.6 413.0 C68.1 436.9 63.9 445.2 67.5 474.7 C71.1 504.2 89.6 570.8 94.0 590.0" stroke="#d2d4c6" stroke-width="1.6"/>
    <path d="M16.0 295.0 C18.6 314.7 26.4 382.7 31.5 413.0 C36.5 443.3 36.5 447.5 46.3 477.0 C56.0 506.5 82.7 571.2 90.0 590.0" stroke="#d3d5c6" stroke-width="3"/>
    <path d="M55.0 111.0 C53.2 126.3 46.3 172.7 44.0 203.0 C41.7 233.3 41.2 271.3 41.0 293.0 C40.8 314.7 40.7 313.0 43.0 333.0 C45.3 353.0 48.2 386.0 55.0 413.0 C61.8 440.0 73.0 465.5 84.0 495.0 C95.0 524.5 114.8 574.2 121.0 590.0" stroke="#6d644e" stroke-width="2.1"/>
    <path d="M16.0 192.0 C19.3 214.7 30.3 291.2 36.0 328.0 C41.7 364.8 43.7 381.7 50.0 413.0 C56.3 444.3 65.0 486.5 74.0 516.0 C83.0 545.5 99.0 577.7 104.0 590.0" stroke="#6d644e" stroke-width="2.6"/>
    <path d="M203.7 270.0 C194.7 280.3 166.2 307.8 149.8 331.6 C133.4 355.4 116.3 384.1 105.5 413.0 C94.7 441.9 86.2 475.5 85.0 505.0 C83.8 534.5 95.8 575.8 98.0 590.0" stroke="#6d644e" stroke-width="2.1"/>
   </g>
  </svg>
  <div class="a" style="left:272px;top:58px;font-family:'Liberation Sans',sans-serif;font-weight:bold;font-style:italic;font-size:38.5px;line-height:48px;white-space:nowrap;color:#fbcfa3;-webkit-text-stroke:1.8px #e3822a;transform-origin:0 0;transform:scaleX(1.04)">Причина 3. Професійне визнання</div>
  <svg class="a" style="left:169px;top:140px" width="17" height="10" viewBox="0 0 17 10"><path d="M0 0H11L16.5 5L11 10H0z" fill="#a52f14"/></svg>
  <div class="body">
   <div style="top:0.00px;transform:scaleX(1.1215)">Розвиток у професії, підвищення кваліфікації, здобуття нових знань</div>
   <div style="top:26.08px;transform:scaleX(1.124)">та навичок – усе це робить нас кращими спеціалістами, відкриваючи</div>
   <div style="top:52.16px;transform:scaleX(1.114)">нові горизонти для кар’єрного зростання. Адже, здобуті знання та</div>
   <div style="top:78.24px;transform:scaleX(1.127)">навички ми можемо застосувати у будь-якій сфері, будь то IT,</div>
   <div style="top:104.32px;transform:scaleX(1.129)">виробництво, чи навіть державне управління. Зосередившись на</div>
   <div style="top:130.40px;transform:scaleX(1.13)">певній галузі, ви можете стати затребуваним експертом, який</div>
   <div style="top:156.48px;transform:scaleX(1.131)">допомагає компаніям та організаціям вирішувати складні фінансові</div>
   <div style="top:182.56px;transform:scaleX(1.16)">питання.</div>
  </div>
  <!-- photo -->
  <svg class="a" style="left:362px;top:336px" width="366" height="252" viewBox="0 0 366 252">
   <defs>
    <linearGradient id="pbg" x1="0" y1="0" x2="0.2" y2="1"><stop offset="0" stop-color="#f1f1f4"/><stop offset=".45" stop-color="#e1e1e8"/><stop offset=".8" stop-color="#e8e8ec"/><stop offset="1" stop-color="#f4f4f6"/></linearGradient>
    <linearGradient id="skin" x1="0" y1="0" x2="1" y2="1"><stop offset="0" stop-color="#eab896"/><stop offset=".6" stop-color="#e0a886"/><stop offset="1" stop-color="#d09070"/></linearGradient>
    <linearGradient id="pages" x1="0" y1="0" x2="0" y2="1"><stop offset="0" stop-color="#f2f2f4"/><stop offset="1" stop-color="#d2d2d8"/></linearGradient>
    <filter id="pb"><feGaussianBlur stdDeviation=".8"/></filter>
   </defs>
   <rect width="366" height="252" fill="url(#pbg)"/>
   <g filter="url(#pb)">
    <path d="M90 174 L98 160 L254 165 L254 178 L90 174z" fill="#2c2c2e"/>
    <path d="M98 161 L130 162 L125 172 L92 172z" fill="#c8c8cc" opacity=".8"/>
    <path d="M90 174 H254 V200 H90z" fill="url(#pages)"/>
    <path d="M78 203 L83 191 L255 195 L255 205 L78 203z" fill="#2a2a2c"/>
    <path d="M80 203 H250 V231 H80z" fill="url(#pages)"/>
    <path d="M78 231 H244 V240 H78z" fill="#2a2a2c" opacity=".9"/>
    <path d="M244 240 L255 230 V196 L250 203 V231 L244 231z" fill="#2e2e30"/>
    <path d="M0 69 L44 49 L93 85 L70 128 L0 103z" fill="#e9edf3"/>
    <path d="M0 98 Q30 108 60 126 L68 130 L0 108z" fill="#6b8cc0" opacity=".75"/>
    <path d="M93 86 Q150 86 214 96 L232 135 L216 162 L196 178 Q180 190 160 186 Q140 180 128 170 L112 152 Q92 140 70 128 Q66 104 93 86z" fill="url(#skin)"/>
    <path d="M125 110 Q165 98 200 118 L212 150 L192 172 Q170 150 140 150 L118 142z" fill="#cf8e6e" opacity=".7"/>
    <path d="M150 110 Q175 100 196 112" stroke="#b67656" stroke-width="2" fill="none"/>
    <path d="M178 170 Q190 160 204 165" stroke="#b67656" stroke-width="1.5" fill="none"/>
    <g fill="#8a6432" stroke="#8a6432">
     <path d="M157 34 V55 M148 54 H172 M150 55 L152 84 M156 55 L154 84 M163 55 L165 84 M169 55 L167 84" stroke-width="1.6" fill="none"/>
     <ellipse cx="153" cy="85" rx="5" ry="2" stroke="none"/>
     <ellipse cx="166" cy="85" rx="5" ry="2" stroke="none"/>
     <ellipse cx="189" cy="44" rx="5" ry="6" stroke="none" fill="#9a7440"/>
     <path d="M182 51 L196 51 L201 70 L205 96 L171 96 L177 70z" stroke="none"/>
     <path d="M184 57 L170 54 M197 62 L206 95" stroke-width="2.6" fill="none"/>
     <path d="M184 60 L190 62 L186 90 L180 90z" fill="#c49c5e" stroke="none" opacity=".7"/>
    </g>
    <path d="M214 128 L208 95 Q230 80 257 69 L313 27 L339 0 L366 0 L366 82 L264 160 L247 141z" fill="#131313"/>
    <circle cx="268.5" cy="124" r="3.6" fill="#9a8a6a"/><circle cx="276.6" cy="119.5" r="3.6" fill="#9a8a6a"/><circle cx="284.8" cy="115" r="3.6" fill="#9a8a6a"/><circle cx="292.3" cy="110.6" r="3.6" fill="#9a8a6a"/>
   </g>
  </svg>
  <!-- logo -->
  <svg class="a" style="left:906px;top:425px" width="120" height="149" viewBox="0 0 120 149">
   <defs><path id="ring" d="M9 10 V82 Q9 139 60 139 Q111 139 111 82 V10"/></defs>
   <path d="M0.5 0.5 H119.5 V80 Q119.5 148.5 60 148.5 Q0.5 148.5 0.5 80z" fill="#0f3c8e"/>
   <path d="M2.5 2.5 H117.5 V80 Q117.5 146.5 60 146.5 Q2.5 146.5 2.5 80z" fill="none" stroke="#e8eef8" stroke-width="1.2"/>
   <text font-family="Liberation Serif" font-weight="bold" font-size="9.2" fill="#f4f6fa" letter-spacing=".75"><textPath href="#ring" startOffset="0">НАЦІОНАЛЬНА АКАДЕМІЯ СТАТИСТИКИ, ОБЛІКУ ТА АУДИТУ</textPath></text>
   <g fill="#eef1f7">
    <path d="M26 14 Q44 16 55 30 L50 36 Q36 30 26 14z"/>
    <path d="M94 14 Q76 16 65 30 L70 36 Q84 30 94 14z"/>
    <path d="M50 26 Q60 22 70 26 L72 38 Q66 48 60 48 Q54 48 48 38z"/>
    <path d="M20 32 Q34 26 42 42 L38 48 Q24 46 20 32z"/>
    <path d="M100 32 Q86 26 78 42 L82 48 Q96 46 100 32z"/>
    <path d="M37 46 L41 43 L87 104 L83 107z"/>
    <path d="M83 46 L79 43 L33 104 L37 107z"/>
    <rect x="46" y="55" width="28" height="24" rx="1"/>
   </g>
   <path d="M25 92 Q27 80 45 86 L60 92 L75 86 Q93 80 95 92 Q94 104 75 98 L60 93 L45 98 Q26 104 25 92z" fill="none" stroke="#eef1f7" stroke-width="3.5"/>
   <text x="60" y="75" font-family="Liberation Sans" font-weight="bold" font-size="17" fill="#0f3c8e" text-anchor="middle">Σ</text>
  </svg>
 </div>
</div>
</body></html>
